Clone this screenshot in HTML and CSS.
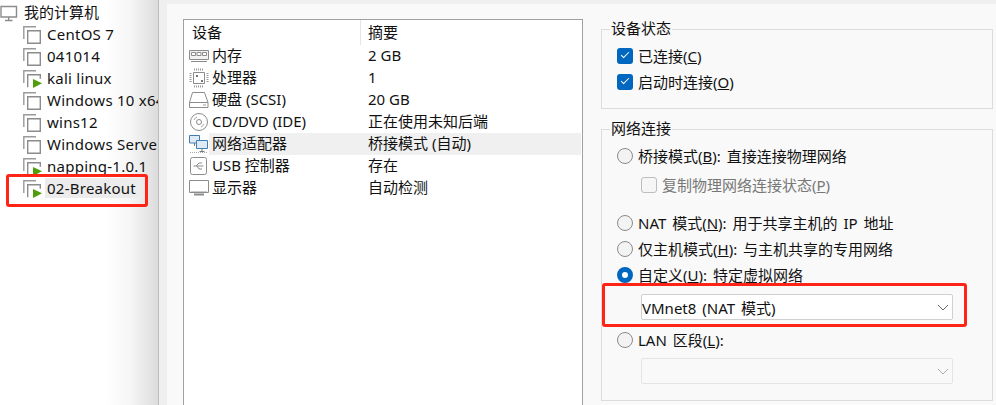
FILE: index.html
```html
<!DOCTYPE html>
<html lang="zh-CN">
<head>
    <meta charset="UTF-8">
    <title>虚拟机设置</title>
    <link rel="stylesheet" href="styles.css">
</head>
<body>
    <svg class="defs" width="0" height="0">
        <symbol id="vm" viewBox="0 0 19 18">
            <path d="M13 .8H.8V13" fill="none" stroke="#9a9a9a" stroke-width="1.4"/>
            <path d="M4.7 4.7h12.6v12.6H4.7z" fill="#fff" stroke="#8c8c8c" stroke-width="1.4"/>
        </symbol>
        <symbol id="vm-on" viewBox="0 0 19 18">
            <path d="M13 .8H.8V13" fill="none" stroke="#9a9a9a" stroke-width="1.4"/>
            <path d="M4.7 17.3V4.7h12.6v4" fill="none" stroke="#8c8c8c" stroke-width="1.4"/>
            <path d="M10 9l9 4.3-9 4.7z" fill="#4f9d0a"/>
        </symbol>
    </svg>

    <div class="app">
        <div class="tree">
            <div class="tree-root">
                <svg class="root-icon" width="18" height="18" viewBox="0 0 18 18">
                    <path d="M1 2.500h15.500v10.500H1z" fill="#fff" stroke="#8c8c8c" stroke-width="1.400"/>
                    <path d="M8.700 13v3M5 16.500h7.500" fill="none" stroke="#8c8c8c" stroke-width="1.400"/>
                </svg>
                <span>我的计算机</span>
            </div>
            <div class="tree-item"><svg class="vm-icon"><use href="#vm"/></svg><span>CentOS 7</span></div>
            <div class="tree-item"><svg class="vm-icon"><use href="#vm"/></svg><span>041014</span></div>
            <div class="tree-item"><svg class="vm-icon"><use href="#vm-on"/></svg><span>kali linux</span></div>
            <div class="tree-item"><svg class="vm-icon"><use href="#vm"/></svg><span>Windows 10 x64</span></div>
            <div class="tree-item"><svg class="vm-icon"><use href="#vm"/></svg><span>wins12</span></div>
            <div class="tree-item"><svg class="vm-icon"><use href="#vm"/></svg><span>Windows Server</span></div>
            <div class="tree-item"><svg class="vm-icon"><use href="#vm-on"/></svg><span>napping-1.0.1</span></div>
            <div class="tree-item selected"><svg class="vm-icon"><use href="#vm-on"/></svg><span>02-Breakout</span></div>
        </div>
        <div class="gutter"></div>

        <div class="main">
            <div class="devices">
                <div class="dev-head">
                    <div class="head-name">设备</div>
                    <div class="head-sum">摘要</div>
                </div>

                <div class="dev-row">
                    <svg class="dev-icon" viewBox="0 0 20 20">
                        <path d="M.5 4.500h19v9H.5z" fill="#f2f2f2" stroke="#8c8c8c"/>
                        <path d="M2.500 6.500h4v3h-4zM8 6.500h4v3H8zM13.500 6.500h4v3h-4z" fill="#fff" stroke="#8c8c8c"/>
                        <path d="M2 15.500h16" stroke="#8c8c8c"/>
                    </svg>
                    <div class="cells"><div class="name">内存</div><div class="sum">2 GB</div></div>
                </div>
                <div class="dev-row">
                    <svg class="dev-icon" viewBox="0 0 20 20">
                        <path d="M4.500 4.500h11v11h-11z" fill="#fff" stroke="#8c8c8c"/>
                        <path d="M7 7h2v2H7zM12 12h2v2h-2z" fill="#777"/>
                        <path d="M5 1.500h10M5 18.500h10M1.500 5v10M18.500 5v10" stroke="#999" stroke-width="2" stroke-dasharray="1 1"/>
                    </svg>
                    <div class="cells"><div class="name">处理器</div><div class="sum">1</div></div>
                </div>
                <div class="dev-row">
                    <svg class="dev-icon" viewBox="0 0 20 20">
                        <path d="M.5 12.500L3.500 2.500h12l3.500 10v5H.5z" fill="#fff" stroke="#8c8c8c"/>
                        <path d="M.5 12.500h18.500" stroke="#8c8c8c"/>
                        <path d="M14 15h3" stroke="#999"/>
                    </svg>
                    <div class="cells"><div class="name">硬盘 (SCSI)</div><div class="sum">20 GB</div></div>
                </div>
                <div class="dev-row">
                    <svg class="dev-icon" viewBox="0 0 20 20">
                        <circle cx="10" cy="10" r="8.500" fill="#fff" stroke="#8c8c8c"/>
                        <circle cx="10" cy="10" r="2.500" fill="#fff" stroke="#8c8c8c"/>
                        <path d="M5 8a5.500 5.500 0 0 1 3-3M15 12a5.500 5.500 0 0 1-3 3" fill="none" stroke="#aaa"/>
                    </svg>
                    <div class="cells"><div class="name">CD/DVD (IDE)</div><div class="sum">正在使用未知后端</div></div>
                </div>
                <div class="dev-row">
                    <svg class="dev-icon" viewBox="0 0 20 20">
                        <path d="M.5 1.500h10v7.500H.5z" fill="#dfeaf5" stroke="#3f7fb5"/>
                        <path d="M7.500 6.500h11v8h-11z" fill="#dfeaf5" stroke="#3f7fb5"/>
                        <path d="M13 14.500v2.500M10.500 17.500h5M5.500 9v3" stroke="#7a7a7a"/>
                        <path d="M1 18.500h18" stroke="#aaa" stroke-dasharray="1 1"/>
                    </svg>
                    <div class="cells current"><div class="name">网络适配器</div><div class="sum">桥接模式 (自动)</div></div>
                </div>
                <div class="dev-row">
                    <svg class="dev-icon" viewBox="0 0 20 20">
                        <rect x="1.500" y="1.500" width="16" height="17" rx="2" fill="#fff" stroke="#8c8c8c"/>
                        <path d="M4.500 10h10M7 10l3-3h3M8 10l2 3h3" fill="none" stroke="#8c8c8c"/>
                    </svg>
                    <div class="cells"><div class="name">USB 控制器</div><div class="sum">存在</div></div>
                </div>
                <div class="dev-row">
                    <svg class="dev-icon" viewBox="0 0 20 20">
                        <path d="M.5 2.500h19v12H.5z" fill="#fff" stroke="#8c8c8c"/>
                        <path d="M5 16.500h10" stroke="#8c8c8c" stroke-width="2"/>
                        <path d="M2 13.500h16" stroke="#ccc"/>
                    </svg>
                    <div class="cells"><div class="name">显示器</div><div class="sum">自动检测</div></div>
                </div>
            </div>

            <div class="settings">
                <fieldset class="group group-status">
                    <legend>设备状态</legend>
                    <div class="opt"><span class="check on"></span>已连接(<u>C</u>)</div>
                    <div class="opt"><span class="check on"></span>启动时连接(<u>O</u>)</div>
                </fieldset>

                <fieldset class="group group-net">
                    <legend>网络连接</legend>
                    <div class="opt"><span class="radio"></span>桥接模式(<u>B</u>): 直接连接物理网络</div>
                    <div class="opt sub disabled"><span class="check"></span>复制物理网络连接状态(<u>P</u>)</div>
                    <div class="opt spaced"><span class="radio"></span>NAT 模式(<u>N</u>): 用于共享主机的 IP 地址</div>
                    <div class="opt"><span class="radio"></span>仅主机模式(<u>H</u>): 与主机共享的专用网络</div>
                    <div class="opt"><span class="radio on"></span>自定义(<u>U</u>): 特定虚拟网络</div>
                    <div class="select">
                        <span>VMnet8 (NAT 模式)</span>
                        <svg class="arrow" width="12" height="7" viewBox="0 0 12 7"><path d="M1 1l5 5 5-5" fill="none" stroke="#666"/></svg>
                    </div>
                    <div class="opt lan"><span class="radio"></span>LAN 区段(<u>L</u>):</div>
                    <div class="select off">
                        <span></span>
                        <svg class="arrow" width="12" height="7" viewBox="0 0 12 7"><path d="M1 1l5 5 5-5" fill="none" stroke="#aaa"/></svg>
                    </div>
                </fieldset>
            </div>
        </div>
    </div>

    <div class="mark mark-vm"></div>
    <div class="mark mark-net"></div>
</body>
</html>
```

FILE: styles.css
```css
html, body {
    margin: 0;
    padding: 0;
    height: 405px;
    overflow: hidden;
}

body {
    position: relative;
    font-family: "Noto Sans", "Noto Sans CJK SC", sans-serif;
    font-size: 15px;
    color: #111;
    background-color: #f9f9f9;
}

.defs {
    position: absolute;
}

.app {
    display: flex;
    height: 405px;
}

/* left tree */
.tree {
    width: 158px;
    flex: none;
    padding-top: 2px;
    box-sizing: border-box;
    overflow: hidden;
    white-space: nowrap;
    background: linear-gradient(to right, #fff 105px, #f6f6f6 130px, #dcdcdc 158px);
}

.tree-root,
.tree-item {
    display: flex;
    align-items: flex-start;
    height: 22px;
    line-height: 20px;
}

.root-icon {
    flex: none;
    margin-right: 6px;
    margin-top: 2px;
}

.tree-item {
    padding-left: 23px;
}

.vm-icon {
    flex: none;
    width: 19px;
    height: 18px;
    margin-right: 3px;
    margin-top: 2px;
}

.tree-item span {
    padding: 0 2px;
    letter-spacing: 0.25px;
}

.tree-item.selected span {
    padding-right: 3px;
    background-color: #ececec;
}

.gutter {
    width: 8px;
    flex: none;
    border-left: 1px solid #bdbdbd;
    background-color: #efefef;
}

/* right side */
.main {
    flex: 1;
    display: flex;
    min-width: 0;
    height: 405px;
    box-sizing: border-box;
    padding: 15px 0 0 16px;
    border-top: 4px solid #f0f0f0;
}

.devices {
    width: 398px;
    height: 400px;
    flex: none;
    border: 1px solid #a0a0a0;
    background-color: #fff;
}

.dev-head {
    display: flex;
    height: 25px;
    line-height: 25px;
}

.head-name {
    width: 177px;
    padding-left: 8px;
    box-sizing: border-box;
    border-right: 1px solid #e5e5e5;
}

.head-sum {
    padding-left: 7px;
}

.dev-row {
    display: flex;
    align-items: center;
    height: 22px;
    padding-left: 5px;
}

.dev-icon {
    width: 20px;
    height: 20px;
    flex: none;
}

.cells {
    flex: 1;
    display: flex;
    height: 22px;
    line-height: 20px;
    margin-right: 1px;
}

.cells.current {
    background-color: #f0f0f0;
}

.name {
    width: 156px;
    padding-left: 3px;
    flex: none;
}

.settings {
    margin-left: 18px;
    width: 392px;
    flex: none;
    margin-top: -15px;
}

.group {
    margin: 0;
    padding: 0 0 0 15px;
    border: 1px solid #dcdcdc;
    box-sizing: border-box;
    width: 392px;
}

.group legend {
    margin-left: -7px;
    padding: 0 1px;
    line-height: 18px;
    height: 20px;
}

.group-status {
    height: 90px;
    margin-top: 15px;
}

.group-net {
    height: 282px;
    margin-top: 10px;
}

.opt {
    display: flex;
    align-items: center;
    height: 26px;
    line-height: 26px;
    white-space: pre;
    word-spacing: 2px;
}

.group-status .opt:first-of-type,
.group-net .opt:first-of-type {
    margin-top: 4px;
}

.opt.sub {
    padding-left: 24px;
    margin-top: 3px;
}

.opt.spaced {
    margin-top: 12px;
}

.opt.disabled {
    color: #777;
}

.check,
.radio {
    flex: none;
    width: 16px;
    height: 16px;
    margin-right: 5px;
    box-sizing: border-box;
    position: relative;
}

.check {
    border: 1px solid #bdbdbd;
    border-radius: 3px;
    background-color: #f6f6f6;
}

.check.on {
    border: none;
    background-color: #0067c0;
}

.check.on::after {
    content: "";
    position: absolute;
    left: 4px;
    top: 4px;
    width: 7px;
    height: 3px;
    border-left: 1px solid #fff;
    border-bottom: 1px solid #fff;
    transform: rotate(-45deg);
}

.radio {
    border: 1px solid #8a8a8a;
    border-radius: 50%;
    background-color: #f3f3f3;
}

.radio.on {
    border: 5px solid #0067c0;
    background-color: #fff;
}

.select {
    display: flex;
    align-items: center;
    justify-content: space-between;
    width: 312px;
    height: 26px;
    margin: 6px 0 0 24px;
    padding: 0 3px 0 0;
    box-sizing: border-box;
    border: 1px solid #d0d0d0;
    border-radius: 2px;
    background-color: #fff;
    word-spacing: 2px;
}

.select.off {
    margin-top: 5px;
    border-color: #e4e4e4;
    background-color: #f9f9f9;
}

.opt.lan {
    margin-top: 7px;
}

/* red marks drawn over the screenshot */
.mark {
    position: absolute;
    box-sizing: border-box;
    border: 3px solid #ff2415;
    border-radius: 3px;
}

.mark-vm {
    left: 6px;
    top: 174px;
    width: 142px;
    height: 33px;
}

.mark-net {
    left: 602px;
    top: 283px;
    width: 365px;
    height: 44px;
}
```
